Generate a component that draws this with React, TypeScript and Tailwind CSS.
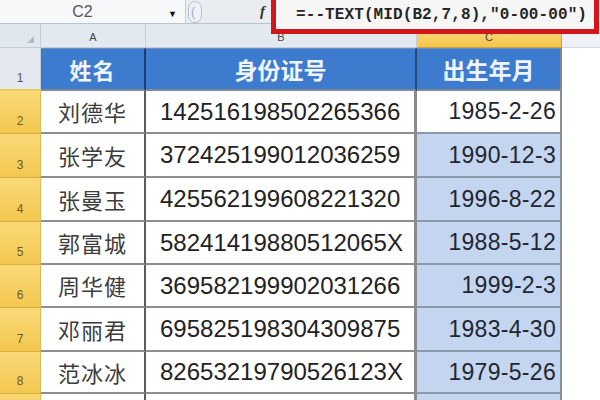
import React from "react";

const rows = [
  { n: "2", name: "刘德华", id: "142516198502265366", d: "1985-2-26", h: "h-[43px]" },
  { n: "3", name: "张学友", id: "372425199012036259", d: "1990-12-3", h: "h-[44px]" },
  { n: "4", name: "张曼玉", id: "425562199608221320", d: "1996-8-22", h: "h-[44px]" },
  { n: "5", name: "郭富城", id: "58241419880512065X", d: "1988-5-12", h: "h-[43px]" },
  { n: "6", name: "周华健", id: "369582199902031266", d: "1999-2-3", h: "h-[43px]" },
  { n: "7", name: "邓丽君", id: "695825198304309875", d: "1983-4-30", h: "h-[44px]" },
  { n: "8", name: "范冰冰", id: "82653219790526123X", d: "1979-5-26", h: "h-[42px]" },
];

const cjk = { fontFamily: '"Noto Sans CJK SC", "Noto Sans", sans-serif' };
const sans = { fontFamily: '"Liberation Sans", Arial, sans-serif' };

export default function App() {
  return (
    <div className="relative w-[600px] h-[400px] overflow-hidden bg-white" style={sans}>
      {/* formula bar */}
      <div className="flex h-[24px] bg-[#e9edf2] border-b border-[#b9c3cf]">
        <div className="relative flex w-[186px] items-center justify-center bg-[#f7f8fa] border-r border-[#c5ccd6]">
          <span className="text-[16px] text-[#555] mr-[20px]">C2</span>
          <span className="absolute right-[8px] top-[8px] text-[9px] text-[#111]">▼</span>
        </div>
        <div className="ml-[2px] mt-[1px] h-[22px] w-[14px] rounded-full border border-[#b8c0cc] bg-[#eef1f5] text-[12px] text-[#a0a8b4] pl-[2px] leading-[20px]">
          (
        </div>
        <div className="flex-1 flex items-center">
          <span className="ml-[58px] text-[15px] italic font-bold text-[#333]" style={{ fontFamily: '"Liberation Serif", serif' }}>
            f
          </span>
        </div>
      </div>

      {/* grid */}
      <div className="grid grid-cols-[41px_105px_271px_145px_1fr]">
        {/* column header row */}
        <div className="h-[24px] bg-[#e1e7ef] border-r border-b border-[#c3ccd8] flex items-end justify-end pr-[6px] pb-[4px]">
          <div className="w-0 h-0 border-l-[7px] border-l-transparent border-b-[7px] border-b-[#b5bdc8]" />
        </div>
        <div className="h-[24px] bg-[#e3e9f1] border-r border-b border-[#c3ccd8] flex items-end justify-center pb-[2px] text-[11px] text-[#444]">A</div>
        <div className="h-[24px] bg-[#e3e9f1] border-r border-b border-[#c3ccd8] flex items-end justify-center pb-[2px] text-[11px] text-[#444]">B</div>
        <div className="h-[24px] bg-gradient-to-b from-[#fbe08d] to-[#f4c447] border-r border-b border-[#c9a445] flex items-end justify-center pb-[2px] text-[11px] text-[#444]">C</div>
        <div className="h-[24px] bg-[#eef1f5] border-b border-[#d5dbe3]" />

        {/* row 1 */}
        <div className="h-[43px] bg-[#e4e9f0] border-r border-[#c3ccd8] border-b-2 border-b-[#f1c84f] flex items-end justify-center pb-[2px] text-[12px] text-[#555]">1</div>
        <div className="h-[43px] bg-[#3d7bcf] border-t border-t-[#6a8fbf] border-r-2 border-r-[#1c3c6e] border-b-2 border-b-[#7e8a99] flex items-center justify-center text-[22px] font-bold tracking-[1px] text-[#eef5ff]" style={cjk}>
          姓名
        </div>
        <div className="h-[43px] bg-[#3d7bcf] border-t border-t-[#6a8fbf] border-r-2 border-r-[#25467a] border-b-2 border-b-[#7e8a99] flex items-center justify-center text-[23px] font-bold text-[#eef5ff]" style={cjk}>
          身份证号
        </div>
        <div className="h-[43px] bg-[#3d7bcf] border-t border-t-[#6a8fbf] border-r-2 border-r-[#7c8694] border-b-2 border-b-[#7e8a99] flex items-center justify-center text-[23px] font-bold text-[#eef5ff]" style={cjk}>
          出生年月
        </div>
        <div className="h-[43px] bg-white" />

        {rows.map((r, i) => (
          <React.Fragment key={r.n}>
            <div className={`${r.h} bg-gradient-to-b from-[#f9d977] to-[#f3c74f] border-r border-r-[#d9b955] border-b border-b-[#d8ac3d] flex items-end justify-center pb-[3px] text-[12px] text-[#6d5a25]`}>
              {r.n}
            </div>
            <div className={`${r.h} bg-white border-r-2 border-r-[#5b5b5b] border-b-2 border-b-[#8e8e8e] flex items-center justify-center text-[22px] tracking-[1px] text-[#3c3c3c]`} style={cjk}>
              {r.name}
            </div>
            <div className={`${r.h} bg-white border-r-[3px] border-r-[#8a8a8a] border-b-2 border-b-[#8e8e8e] flex items-center pl-[14px] text-[24px] text-[#222]`}>
              {r.id}
            </div>
            <div className={`${r.h} ${i === 0 ? "bg-white" : "bg-[#c4d5ef]"} border-r-2 border-r-[#8a8f96] border-b-2 border-b-[#8b98ac] flex items-center justify-end pr-[4px] text-[23px] tracking-[0.3px] text-[#1f2633]`}>
              {r.d}
            </div>
            <div className={`${r.h} bg-white`} />
          </React.Fragment>
        ))}
        <div className="h-[20px] bg-gradient-to-b from-[#f9d977] to-[#f3c74f] border-r border-r-[#d9b955]" />
        <div className="h-[20px] bg-white border-r-2 border-r-[#5b5b5b]" />
        <div className="h-[20px] bg-white border-r-[3px] border-r-[#8a8a8a]" />
        <div className="h-[20px] bg-[#c4d5ef] border-r-2 border-r-[#8a8f96]" />
        <div className="h-[20px] bg-white" />
      </div>

      {/* red annotation frame over formula */}
      <div className="absolute left-[271px] top-[-6px] w-[328px] h-[40px] border-[5px] border-[#d3161c] bg-[#f6f6f6] flex items-center pl-[20px] pt-[2px]">
        <span className="text-[16px] font-bold tracking-[0.1px] text-[#262626] whitespace-pre" style={{ fontFamily: '"Liberation Mono", monospace' }}>
          =--TEXT(MID(B2,7,8),"0-00-00")
        </span>
      </div>
    </div>
  );
}
